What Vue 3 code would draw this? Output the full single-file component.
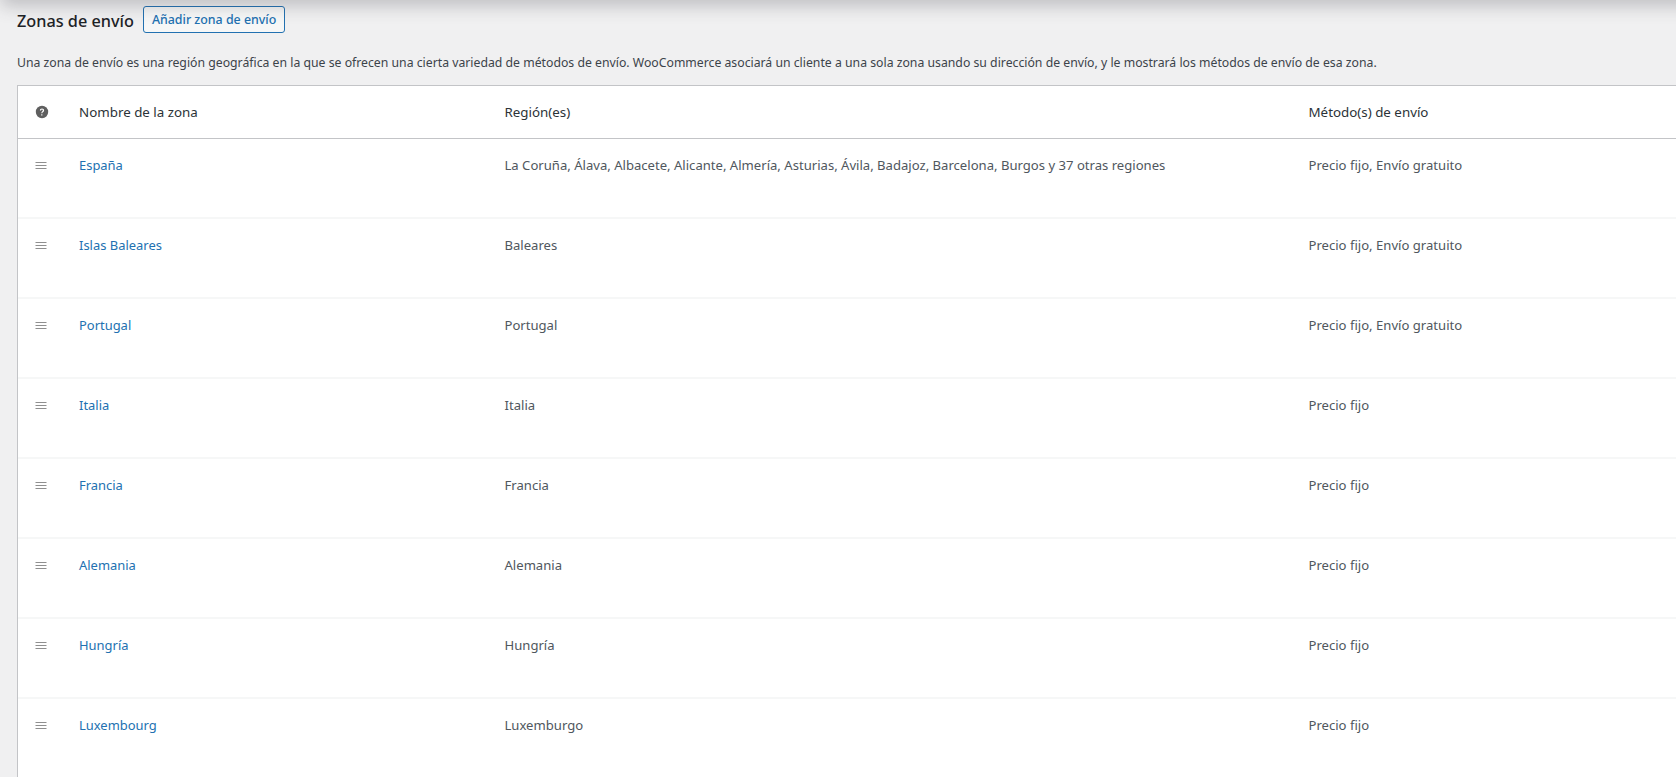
<script setup>
const zones = [
  { name: 'España', regions: 'La Coruña, Álava, Albacete, Alicante, Almería, Asturias, Ávila, Badajoz, Barcelona, Burgos y 37 otras regiones', methods: 'Precio fijo, Envío gratuito' },
  { name: 'Islas Baleares', regions: 'Baleares', methods: 'Precio fijo, Envío gratuito' },
  { name: 'Portugal', regions: 'Portugal', methods: 'Precio fijo, Envío gratuito' },
  { name: 'Italia', regions: 'Italia', methods: 'Precio fijo' },
  { name: 'Francia', regions: 'Francia', methods: 'Precio fijo' },
  { name: 'Alemania', regions: 'Alemania', methods: 'Precio fijo' },
  { name: 'Hungría', regions: 'Hungría', methods: 'Precio fijo' },
  { name: 'Luxembourg', regions: 'Luxemburgo', methods: 'Precio fijo' },
]
</script>

<template>
  <div class="page">
    <div class="topshadow"></div>
    <div class="content">
      <div class="heading">
        <h2>Zonas de envío</h2>
        <a class="btn">Añadir zona de envío</a>
      </div>
      <p class="desc">Una zona de envío es una región geográfica en la que se ofrecen una cierta variedad de métodos de envío. WooCommerce asociará un cliente a una sola zona usando su dirección de envío, y le mostrará los métodos de envío de esa zona.</p>
      <div class="table">
        <div class="row head">
          <div class="icon-cell">
            <svg width="14" height="14" viewBox="0 0 14 14">
              <circle cx="7" cy="7" r="6.2" fill="#5f5f5f" />
              <path d="M4.9 5.5c0-1.2.9-1.9 2.1-1.9s2.1.7 2.1 1.8c0 1.5-1.8 1.500-1.800 2.800H6.300c0-1.900 1.500-1.900 1.500-2.800 0-.5-.3-.8-.8-.8s-.9.3-.9.9z" fill="#fff" />
              <rect x="6.200" y="9.300" width="1.200" height="1.200" fill="#fff" />
            </svg>
          </div>
          <div>Nombre de la zona</div>
          <div>Región(es)</div>
          <div>Método(s) de envío</div>
        </div>
        <div v-for="z in zones" :key="z.name" class="row body">
          <div class="icon-cell">
            <svg width="12" height="8" viewBox="0 0 12 8">
              <rect x="0.500" y="0" width="11" height="1" fill="#8f8f8f" />
              <rect x="0.500" y="3" width="11" height="1" fill="#8f8f8f" />
              <rect x="0.500" y="6" width="11" height="1" fill="#8f8f8f" />
            </svg>
          </div>
          <a class="link">{{ z.name }}</a>
          <div>{{ z.regions }}</div>
          <div>{{ z.methods }}</div>
        </div>
      </div>
    </div>
  </div>
</template>

<style>
html, body { margin: 0; overflow: hidden; background: #f0f0f1; }
</style>

<style scoped>
.page {
  height: 777px;
  width: 1676px;
  overflow: hidden;
  position: relative;
  background: #f0f0f1;
  font-family: "Noto Sans", "Open Sans", sans-serif;
  font-size: 13.1px;
  color: #50575e;
}
.topshadow {
  position: absolute;
  top: -12px;
  left: 5px;
  right: -30px;
  height: 12px;
  box-shadow: 0 1px 18px 4px rgba(60, 60, 70, 0.3);
}
.content { padding: 6px 0 0 17px; }
.heading {
  display: flex;
  align-items: center;
  gap: 9px;
  height: 27px;
}
h2 {
  margin: 3px 0 0;
  font-size: 16.25px;
  font-weight: 500;
  color: #1d2327;
}
.btn {
  display: flex;
  align-items: center;
  height: 25px;
  padding: 0 8px;
  border: 1px solid #2271b1;
  border-radius: 3px;
  font-size: 12.4px;
  font-weight: 500;
  color: #2271b1;
  background: #f6f7f7;
}
.desc {
  margin: 0;
  padding-top: 21px;
  line-height: 17px;
  font-size: 12.25px;
  color: #3c434a;
  white-space: nowrap;
}
.table {
  margin: 14px -4px 0 0;
  background: #fff;
  border: 1px solid #c3c4c7;
  border-bottom: 0;
}
.row {
  display: grid;
  grid-template-columns: 61px 425.500px 804px 1fr;
}
.head {
  align-items: center;
  border-bottom: 1px solid #c3c4c7;
  color: #2c3338;
  font-size: 13.35px;
  padding-bottom: 1px;
  box-sizing: border-box;
  height: 53px;
}
.body {
  height: 80px;
  padding-top: 18px;
  box-sizing: border-box;
  line-height: 17px;
  border-bottom: 2px solid #f6f7f7;
}
.icon-cell {
  display: flex;
  padding-left: 17px;
  align-items: center;
}
.head .icon-cell { padding-left: 17px; padding-top: 1px; }
.body .icon-cell { height: 17px; }
.link { color: #2271b1; font-size: 12.95px; }
</style>
